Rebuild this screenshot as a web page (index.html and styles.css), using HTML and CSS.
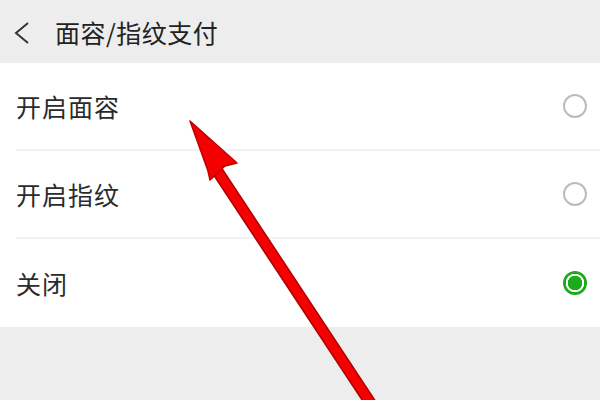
FILE: index.html
```html
<!DOCTYPE html>
<html lang="zh-CN">
<head>
  <meta charset="UTF-8" />
  <title>面容/指纹支付</title>
  <link rel="stylesheet" href="styles.css">
</head>
<body>

<div class="page">
  <div class="topbar">
    <svg class="back" width="16" height="24" viewBox="0 0 16 24">
      <polyline points="14,2 2,12 14,22" fill="none" stroke="#333" stroke-width="2" />
    </svg>
    <span class="title">面容/指纹支付</span>
  </div>

  <div class="list">
    <div class="row">
      <span class="label">开启面容</span>
      <span class="radio"></span>
    </div>
    <div class="row">
      <span class="label">开启指纹</span>
      <span class="radio"></span>
    </div>
    <div class="row">
      <span class="label">关闭</span>
      <span class="radio checked"></span>
    </div>
  </div>

  <!-- red pointer drawn over the list -->
  <svg class="pointer" width="600" height="400" viewBox="0 0 600 400">
    <line x1="214" y1="166" x2="375" y2="410" stroke="#b00000" stroke-width="12" />
    <line x1="214" y1="166" x2="375" y2="410" stroke="#f40000" stroke-width="9" />
    <polygon points="190,121 237,163 225,166 210,180 208,171" fill="#f40000" stroke="#c00000" stroke-width="1.5" stroke-linejoin="round" />
  </svg>
</div>

</body>
</html>
```

FILE: styles.css
```css
* {
  box-sizing: border-box;
}

body {
  margin: 0;
  padding: 0;
  font-family: "Noto Sans CJK SC", "Noto Sans", sans-serif;
  background: #ededed;
}

.page {
  position: relative;
  width: 600px;
  height: 400px;
  overflow: hidden;
  background: #ededed;
}

.topbar {
  height: 63px;
  display: flex;
  align-items: center;
  padding-left: 14px;
  background: #ededed;
}

.back {
  margin-right: 25px;
  margin-top: 2px;
}

.title {
  font-size: 25px;
  color: #222;
  letter-spacing: 0.5px;
}

.list {
  background: #fff;
}

.row {
  height: 88px;
  margin-left: 16px;
  padding-right: 13px;
  display: flex;
  align-items: center;
  justify-content: space-between;
  border-bottom: 2px solid #f2f2f2;
}

.row:last-child {
  border-bottom: none;
}

.label {
  font-size: 25px;
  color: #2b2b2b;
  letter-spacing: 1px;
}

.radio {
  width: 24px;
  height: 24px;
  border-radius: 50%;
  border: 2px solid #bbb;
}

.radio.checked {
  border-color: #1aad19;
  background: radial-gradient(circle, #1aad19 0 7px, #fff 7.5px 9px, #1aad19 9.5px);
}

.pointer {
  position: absolute;
  top: 0;
  left: 0;
}
```
